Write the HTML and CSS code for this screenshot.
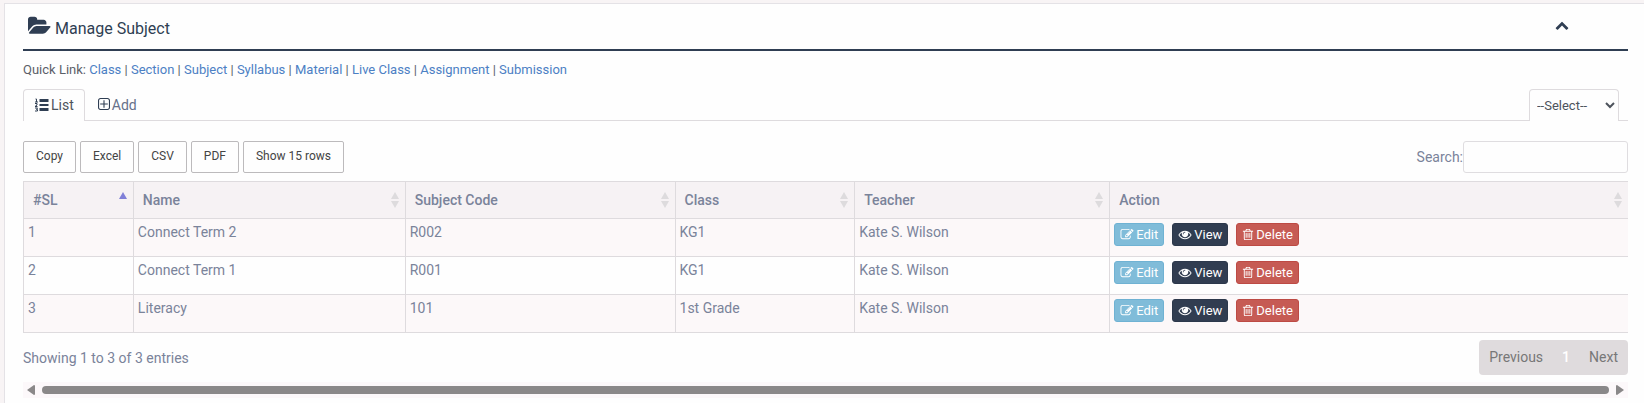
FILE: index.html
```html
<!DOCTYPE html>
<html lang="en">
<head>
    <meta charset="UTF-8">
    <meta name="viewport" content="width=device-width, initial-scale=1.0">
    <title>Manage Subject</title>
    <link rel="stylesheet" href="styles.css">
</head>
<body>

    <!-- icons used more than once -->
    <svg class="sprite" aria-hidden="true">
        <symbol id="i-edit" viewBox="0 0 1792 1792"><path d="M888 1184l116-116-152-152-116 116v56h96v96h56zm440-720q-16-16-33 1l-350 350q-17 17-1 33t33-1l350-350q17-17 1-33zm80 594v190q0 119-84.5 203.5t-203.5 84.5h-832q-119 0-203.5-84.5t-84.5-203.5v-832q0-119 84.5-203.5t203.5-84.5h832q63 0 117 25 15 7 18 23 3 17-9 29l-49 49q-14 14-32 8-23-6-45-6h-832q-66 0-113 47t-47 113v832q0 66 47 113t113 47h832q66 0 113-47t47-113v-126q0-13 9-22l64-64q15-15 35-7t20 29zm-96-738l288 288-672 672h-288v-288zm444 132l-92 92-288-288 92-92q28-28 68-28t68 28l152 152q28 28 28 68t-28 68z"/></symbol>
        <symbol id="i-eye" viewBox="0 0 1792 1792"><path d="M1664 960q-152-236-381-353 61 104 61 225 0 185-131.5 316.5t-316.5 131.5-316.5-131.5-131.5-316.5q0-121 61-225-229 117-381 353 133 205 333.5 326.5t434.5 121.5 434.5-121.5 333.5-326.5zm-720-384q0-20-14-34t-34-14q-125 0-214.5 89.5t-89.5 214.5q0 20 14 34t34 14 34-14 14-34q0-86 61-147t147-61q20 0 34-14t14-34zm848 384q0 34-20 69-140 230-376.5 368.5t-499.5 138.5-499.5-139-376.5-368q-20-35-20-69t20-69q140-229 376.5-368t499.5-139 499.5 139 376.5 368q20 35 20 69z"/></symbol>
        <symbol id="i-trash" viewBox="192 0 1408 1792"><path d="M704 736v576q0 14-9 23t-23 9h-64q-14 0-23-9t-9-23v-576q0-14 9-23t23-9h64q14 0 23 9t9 23zm256 0v576q0 14-9 23t-23 9h-64q-14 0-23-9t-9-23v-576q0-14 9-23t23-9h64q14 0 23 9t9 23zm256 0v576q0 14-9 23t-23 9h-64q-14 0-23-9t-9-23v-576q0-14 9-23t23-9h64q14 0 23 9t9 23zm128 724v-948h-896v948q0 22 7 40.5t14.5 27 10.5 8.5h832q3 0 10.5-8.5t14.5-27 7-40.5zm-672-1076h448l-48-117q-7-9-17-11h-317q-10 2-17 11zm928 32v64q0 14-9 23t-23 9h-96v948q0 83-47 143.5t-113 60.5h-832q-66 0-113-58.5t-47-141.5v-952h-96q-14 0-23-9t-9-23v-64q0-14 9-23t23-9h309l70-167q15-37 54-63t79-26h320q40 0 79 26t54 63l70 167h309q14 0 23 9t9 23z"/></symbol>
        <symbol id="i-sort" viewBox="0 0 8 16"><path d="M4 0l4 7H0zM0 9h8l-4 7z"/></symbol>
    </svg>

    <div class="panel">
        <div class="panel-title">
            <h3>
                <svg class="icon-folder" viewBox="0 0 1920 1792"><path d="M1879 952q0 31-31 66l-336 396q-43 51-120.5 86.5t-143.5 35.5h-1088q-34 0-60.5-13t-26.5-43q0-31 31-66l336-396q43-51 120.5-86.5t143.5-35.5h1088q34 0 60.5 13t26.5 43zm-343-344v160h-832q-94 0-197 47.5t-164 119.5l-337 396-5 6q0-4-.5-12.5t-.5-12.5v-960q0-92 66-158t158-66h320q92 0 158 66t66 158v32h544q92 0 158 66t66 158z"/></svg>
                <span>Manage Subject</span>
            </h3>
            <button class="collapse" type="button" aria-label="Collapse">
                <svg viewBox="0 0 1792 1792"><path d="M1683 1331l-166 165q-19 19-45 19t-45-19l-531-531-531 531q-19 19-45 19t-45-19l-166-165q-19-19-19-45.5t19-45.5l742-741q19-19 45-19t45 19l742 741q19 19 19 45.5t-19 45.5z"/></svg>
            </button>
        </div>

        <div class="quick-link">
            Quick Link:
            <a href="#">Class</a> |
            <a href="#">Section</a> |
            <a href="#">Subject</a> |
            <a href="#">Syllabus</a> |
            <a href="#">Material</a> |
            <a href="#">Live Class</a> |
            <a href="#">Assignment</a> |
            <a href="#">Submission</a>
        </div>

        <div class="tabs">
            <a class="tab active" href="#">
                <svg viewBox="0 0 14 14"><path d="M5 1h9v3H5zM5 6h9v2H5zM5 10h9v3H5z"/><path class="digits" d="M1 1h1v3M.5 4h3M.5 5.500h2v1.500l-2 1.500h2.500M.5 10h2.500l-1 1.500h1v1.500h-2.500"/></svg>
                <span>List</span>
            </a>
            <a class="tab" href="#">
                <svg viewBox="192 128 1408 1408"><path d="M1344 800v64q0 14-9 23t-23 9h-352v352q0 14-9 23t-23 9h-64q-14 0-23-9t-9-23v-352h-352q-14 0-23-9t-9-23v-64q0-14 9-23t23-9h352v-352q0-14 9-23t23-9h64q14 0 23 9t9 23v352h352q14 0 23 9t9 23zm128 448v-832q0-66-47-113t-113-47h-832q-66 0-113 47t-47 113v832q0 66 47 113t113 47h832q66 0 113-47t47-113zm128-832v832q0 119-84.5 203.5t-203.5 84.5h-832q-119 0-203.5-84.5t-84.5-203.5v-832q0-119 84.5-203.5t203.5-84.5h832q119 0 203.5 84.5t84.5 203.5z"/></svg>
                <span>Add</span>
            </a>
            <select class="class-select" aria-label="Class">
                <option>--Select--</option>
            </select>
        </div>

        <div class="toolbar">
            <div class="dt-buttons">
                <button type="button">Copy</button>
                <button type="button">Excel</button>
                <button type="button">CSV</button>
                <button type="button">PDF</button>
                <button type="button">Show 15 rows</button>
            </div>
            <div class="search">
                <label for="search">Search:</label>
                <input type="search" id="search">
            </div>
        </div>

        <table>
            <colgroup>
                <col class="c-sl">
                <col class="c-name">
                <col class="c-code">
                <col class="c-class">
                <col class="c-teacher">
                <col>
            </colgroup>
            <thead>
                <tr>
                    <th><div>#SL <svg class="asc" viewBox="0 0 8 16"><path d="M4 0l4 7H0z"/></svg></div></th>
                    <th><div>Name <svg><use href="#i-sort"/></svg></div></th>
                    <th><div>Subject Code <svg><use href="#i-sort"/></svg></div></th>
                    <th><div>Class <svg><use href="#i-sort"/></svg></div></th>
                    <th><div>Teacher <svg><use href="#i-sort"/></svg></div></th>
                    <th><div>Action <svg><use href="#i-sort"/></svg></div></th>
                </tr>
            </thead>
            <tbody>
                <tr>
                    <td>1</td>
                    <td>Connect Term 2</td>
                    <td>R002</td>
                    <td>KG1</td>
                    <td>Kate S. Wilson</td>
                    <td>
                        <div class="actions">
                            <a class="btn edit" href="#"><svg><use href="#i-edit"/></svg>Edit</a>
                            <a class="btn view" href="#"><svg><use href="#i-eye"/></svg>View</a>
                            <a class="btn delete" href="#"><svg><use href="#i-trash"/></svg>Delete</a>
                        </div>
                    </td>
                </tr>
                <tr>
                    <td>2</td>
                    <td>Connect Term 1</td>
                    <td>R001</td>
                    <td>KG1</td>
                    <td>Kate S. Wilson</td>
                    <td>
                        <div class="actions">
                            <a class="btn edit" href="#"><svg><use href="#i-edit"/></svg>Edit</a>
                            <a class="btn view" href="#"><svg><use href="#i-eye"/></svg>View</a>
                            <a class="btn delete" href="#"><svg><use href="#i-trash"/></svg>Delete</a>
                        </div>
                    </td>
                </tr>
                <tr>
                    <td>3</td>
                    <td>Literacy</td>
                    <td>101</td>
                    <td>1st Grade</td>
                    <td>Kate S. Wilson</td>
                    <td>
                        <div class="actions">
                            <a class="btn edit" href="#"><svg><use href="#i-edit"/></svg>Edit</a>
                            <a class="btn view" href="#"><svg><use href="#i-eye"/></svg>View</a>
                            <a class="btn delete" href="#"><svg><use href="#i-trash"/></svg>Delete</a>
                        </div>
                    </td>
                </tr>
            </tbody>
        </table>

        <div class="table-footer">
            <div>Showing 1 to 3 of 3 entries</div>
            <div class="pagination">
                <a href="#">Previous</a>
                <a class="current" href="#">1</a>
                <a href="#">Next</a>
            </div>
        </div>

        <div class="scrollbar">
            <svg viewBox="0 0 8 10"><path d="M7 0q1 0 1 1v8q0 1-1 1L0 5z"/></svg>
            <div class="thumb"></div>
            <svg viewBox="0 0 8 10"><path d="M1 0Q0 0 0 1v8q0 1 1 1l7-5z"/></svg>
        </div>
    </div>

</body>
</html>
```
FILE: styles.css
```css
* {
    box-sizing: border-box;
}
body {
    margin: 0;
    padding: 3px 0 0 4px;
    background: #f8f4f5;
    color: #7a839a;
    font-family: Roboto, sans-serif;
    font-size: 14px;
    line-height: 20px;
    overflow: hidden;
}
a {
    text-decoration: none;
}
svg {
    fill: currentColor;
    flex: none;
}
.sprite {
    display: none;
}
.panel {
    min-height: 100vh;
    padding: 0 16px 0 18px;
    background: #fefefe;
    border: 1px solid #e4e2e6;
    border-right: none;
}
.panel-title {
    display: flex;
    justify-content: space-between;
    height: 47px;
    padding: 0 58px 0 5px;
    border-bottom: 2px solid #2f3e53;
    color: #2f3e53;
}
.panel-title h3 {
    display: flex;
    gap: 4px;
    margin: 0;
    padding-top: 15px;
    font-size: 16px;
    font-weight: 400;
}
.icon-folder {
    width: 23px;
    height: 22px;
    margin-top: -4px;
}
.collapse {
    display: flex;
    padding: 14px 0 0;
    border: none;
    background: none;
    color: inherit;
}
.collapse svg {
    width: 16px;
    height: 14px;
}
.quick-link {
    padding: 9px 0;
    color: #5b6068;
    font-size: 13px;
}
.quick-link a {
    color: #4c80c4;
}
.tabs {
    display: flex;
    height: 32px;
    border-bottom: 1px solid #dedbde;
}
.tab {
    display: flex;
    gap: 2px;
    height: 32px;
    padding: 5px 12px;
    border: 1px solid transparent;
    color: #66718a;
}
.tab svg {
    width: 12px;
    height: 12px;
    margin-top: 3px;
    color: #2f3e53;
}
.tab.active {
    padding: 5px 10px;
    background: #fefefe;
    border-color: #dedbde;
    border-bottom: none;
    border-radius: 4px 4px 0 0;
    color: #4d535c;
}
.tab.active svg {
    width: 15px;
    height: 14px;
}
.digits {
    fill: none;
    stroke: currentColor;
}
.class-select {
    height: 32px;
    width: 90px;
    margin: 0 9px 0 auto;
    padding: 0 0 0 3px;
    background: #fefefe;
    border: 1px solid #dedbde;
    border-bottom: none;
    border-radius: 4px 4px 0 0;
    color: #4d535c;
    font: 13px Roboto, sans-serif;
}
.toolbar {
    display: flex;
    justify-content: space-between;
    margin: 20px 0 8px;
}
.dt-buttons {
    display: flex;
    gap: 4px;
}
.dt-buttons button {
    height: 32px;
    padding: 0 12px 3px;
    background: #fefefe;
    border: 1px solid #bcbabc;
    border-radius: 2px;
    color: #444;
    font: 12px Roboto, sans-serif;
}
.search {
    display: flex;
    align-items: center;
}
.search input {
    width: 165px;
    height: 32px;
    background: #fefefe;
    border: 1px solid #dfdde0;
    border-radius: 3px;
}
table {
    width: 100%;
    table-layout: fixed;
    border-spacing: 0;
    border-top: 1px solid #dedbde;
    border-left: 1px solid #dedbde;
}
.c-sl {
    width: 6.85%;
}
.c-name {
    width: 16.95%;
}
.c-code {
    width: 16.82%;
}
.c-class {
    width: 11.2%;
}
.c-teacher {
    width: 15.9%;
}
th, td {
    border-right: 1px solid #dedbde;
    border-bottom: 1px solid #dedbde;
    text-align: left;
    vertical-align: top;
}
th:last-child, td:last-child {
    border-right: none;
}
th {
    height: 37px;
    padding: 8px 6px 8px 9px;
    background: #f6f2f4;
    font-weight: 500;
}
th div {
    display: flex;
    align-items: center;
    justify-content: space-between;
}
th svg {
    width: 8px;
    height: 16px;
    color: #dddbdd;
}
th .asc {
    color: #8080d8;
}
td {
    height: 38px;
    padding: 3px 4px;
}
tbody tr:nth-child(odd) {
    background: #fcf8f9;
}
.actions {
    display: flex;
    gap: 8px;
    padding-top: 1px;
}
.btn {
    display: flex;
    align-items: center;
    gap: 2px;
    height: 23px;
    padding: 0 5px;
    border: 1px solid;
    border-radius: 3px;
    color: #fff;
    font-size: 13px;
}
.btn svg {
    width: 14px;
    height: 13px;
}
.edit {
    background: #80bcd9;
    border-color: #6fb2d3;
}
.view {
    background: #313d51;
    border-color: #2c384b;
}
.delete {
    background: #c65b54;
    border-color: #bd4a44;
}
.delete svg {
    width: 12px;
}
.table-footer {
    display: flex;
    align-items: center;
    justify-content: space-between;
    margin: 7px 0;
}
.pagination {
    display: flex;
    gap: 19px;
    padding: 7px 10px 8px;
    background: #dfdbdd;
    border-radius: 4px;
}
.pagination a {
    color: #777;
}
.pagination .current {
    color: #fff;
    font-weight: 500;
}
.scrollbar {
    display: flex;
    align-items: center;
    gap: 7px;
    height: 16px;
    padding: 0 4px;
    background: #fcf8fa;
    color: #8a8889;
}
.scrollbar svg {
    width: 8px;
    height: 10px;
}
.thumb {
    flex: 1;
    height: 8px;
    background: #8a8889;
    border-radius: 4px;
}
```
